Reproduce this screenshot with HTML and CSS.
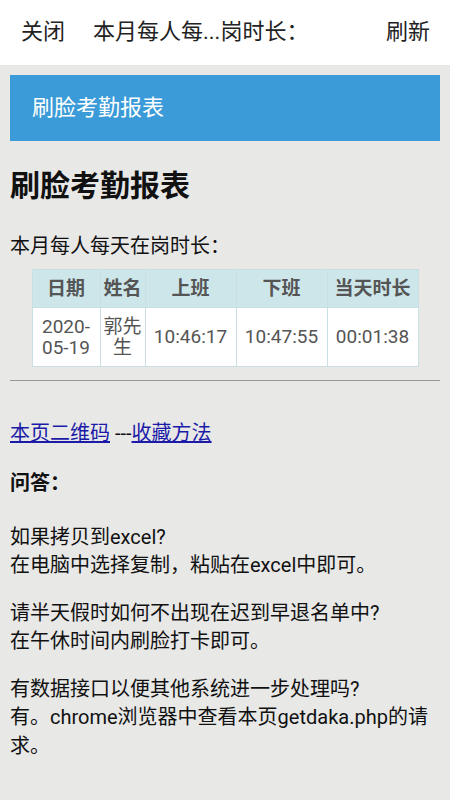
FILE: index.html
```html
<!DOCTYPE html>
<html lang="zh-CN">
<head>
  <meta charset="UTF-8" />
  <meta name="viewport" content="width=device-width, initial-scale=1.0" />
  <title>刷脸考勤报表</title>
  <link rel="stylesheet" href="styles.css">
</head>
<body>
  <div class="topbar">
    <span class="topbar-btn">关闭</span>
    <span class="topbar-title">本月每人每...岗时长：</span>
    <span class="topbar-btn">刷新</span>
  </div>

  <div class="page">
    <div class="banner">刷脸考勤报表</div>

    <h1>刷脸考勤报表</h1>

    <p class="intro">本月每人每天在岗时长：</p>

    <table class="report">
      <colgroup>
        <col class="col-date">
        <col class="col-name">
        <col class="col-time">
        <col class="col-time">
        <col class="col-time">
      </colgroup>
      <tr>
        <th>日期</th>
        <th>姓名</th>
        <th>上班</th>
        <th>下班</th>
        <th>当天时长</th>
      </tr>
      <tr>
        <td>2020-05-19</td>
        <td>郭先生</td>
        <td>10:46:17</td>
        <td>10:47:55</td>
        <td>00:01:38</td>
      </tr>
    </table>

    <hr>

    <p class="links"><a href="#">本页二维码</a> ---<a href="#">收藏方法</a></p>

    <p class="qa-title">问答：</p>

    <p class="qa">如果拷贝到excel?<br>在电脑中选择复制，粘贴在excel中即可。</p>
    <p class="qa">请半天假时如何不出现在迟到早退名单中?<br>在午休时间内刷脸打卡即可。</p>
    <p class="qa">有数据接口以便其他系统进一步处理吗?<br>有。chrome浏览器中查看本页getdaka.php的请求。</p>
  </div>
</body>
</html>
```

FILE: styles.css
```css
body {
  margin: 0;
  background-color: #e8e8e7;
  color: #111;
  font-family: Roboto, "Noto Sans CJK SC", sans-serif;
  font-size: 20px;
  line-height: 28.5px;
}
.topbar {
  display: flex;
  align-items: center;
  height: 65px;
  background: #fff;
  padding: 0 20px 0 21px;
  font-size: 22px;
  color: #222;
}
.topbar-title {
  flex: 1;
  margin-left: 28px;
}
.page {
  padding: 10px 10px 40px;
}
.banner {
  background: #3a9bd8;
  color: #fff;
  height: 66px;
  padding-left: 22px;
  display: flex;
  align-items: center;
  font-size: 22px;
}
h1 {
  font-size: 30px;
  line-height: 45px;
  margin: 22px 0 24px;
}
.intro {
  margin: 0 0 8px;
}
.report {
  width: 386px;
  margin: 0 auto;
  table-layout: fixed;
  border-collapse: collapse;
  background: #fff;
  color: #555;
  font-size: 19px;
  line-height: 21px;
}
.col-date {
  width: 68px;
}
.col-name {
  width: 45px;
}
.col-time {
  width: 91px;
}
.report th, .report td {
  border: 1px solid #c9dfe4;
  padding: 8px 3px;
  text-align: center;
}
.report th {
  background: #cde6ea;
  font-weight: bold;
  white-space: nowrap;
}
hr {
  border: none;
  border-top: 1px solid #9a9a9a;
  margin: 13px 0 0;
}
.links {
  margin: 38px 0 0;
}
a {
  color: #1b1ba8;
}
.qa-title {
  font-weight: bold;
  margin: 22px 0 0;
}
.qa {
  margin: 25px 0 0;
}
.qa + .qa {
  margin-top: 19px;
}
```
